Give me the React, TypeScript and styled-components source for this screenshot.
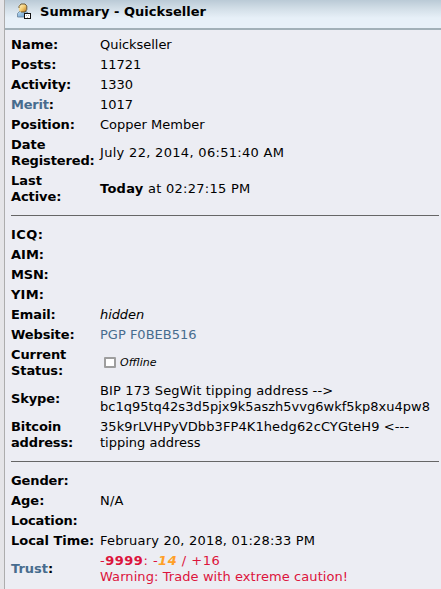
import React from "react";
import styled, { createGlobalStyle } from "styled-components";

const GlobalStyle = createGlobalStyle`
  body {
    margin: 0;
    background: #e5e5e8;
    overflow: hidden;
  }
`;

const Panel = styled.main`
  box-sizing: border-box;
  width: 437px;
  height: 589px;
  margin-left: 4px;
  border-left: 1px solid #adadad;
  background: #ecedf3;
  color: #000;
  font: 13px/16px Verdana, "DejaVu Sans", sans-serif;
  overflow: hidden;
`;

const TitleBar = styled.header`
  box-sizing: border-box;
  display: flex;
  align-items: flex-start;
  gap: 8px;
  height: 30px;
  padding: 4px 0 0 11px;
  border-bottom: 2px solid #a1b0b8;
  background: linear-gradient(#bacad6 0, #d3dfe8 9px, #e7f0f8 18px, #e7f0f8 100%);
`;

const Title = styled.h1`
  margin: 0;
  font-size: 13px;
  line-height: 16px;
  letter-spacing: 0.02px;
  white-space: nowrap;
`;

const Details = styled.dl`
  margin: 4px 0 0;
  padding-left: 6px;
`;

const Row = styled.div`
  display: grid;
  grid-template-columns: 89px 1fr;
  align-items: center;
  padding: 2px 0;
  min-height: 16px;
`;

const Label = styled.dt`
  font-weight: bold;
  white-space: nowrap;
`;

const Value = styled.dd`
  margin: 0;
  white-space: nowrap;
`;

const Line = styled.span<{ $track?: number }>`
  display: block;
  height: 16px;
  line-height: 18px;
  letter-spacing: ${(p) => p.$track ?? 0}px;
`;

const Link = styled.a`
  color: #476c8e;
  text-decoration: none;
`;

const Rule = styled.hr`
  width: 428px;
  height: 1px;
  margin: 9px 0 8px;
  border: 0;
  background: #666;
`;

const Status = styled.span`
  display: flex;
  align-items: center;
  gap: 4px;
  padding-left: 4px;
  font-size: 11px;
  font-style: italic;
`;

const StatusBox = styled.span`
  box-sizing: border-box;
  width: 12px;
  height: 11px;
  margin-top: -1px;
  border: 2px solid #9e9e9e;
  border-radius: 1px;
  background: #fff;
`;

const Danger = styled.span`
  color: #dc143c;
`;

const Score = styled.b`
  color: #ffa028;
  font-style: italic;
`;

const IconDrawing = styled.svg`
  display: block;
  width: 16px;
  height: 16px;
  margin-top: -1px;
`;

const ProfileIcon = () => (
  <IconDrawing viewBox="0 0 16 16" aria-hidden="true">
    <defs>
      <linearGradient id="head" x1="0" y1="0" x2="1" y2="1">
        <stop offset="0" stopColor="#fff8d5" />
        <stop offset=".5" stopColor="#f5ce74" />
        <stop offset="1" stopColor="#b9741c" />
      </linearGradient>
      <linearGradient id="coat" x1="0" y1="0" x2="1" y2="1">
        <stop offset="0" stopColor="#c4e0f3" />
        <stop offset="1" stopColor="#5b94c8" />
      </linearGradient>
    </defs>
    <path d="M4 8 1.5 10.5V14H12V10L9.5 8Z" fill="url(#coat)" stroke="#668299" strokeWidth=".8" />
    <rect x="2.8" y="1" width="7.8" height="8" rx="3" fill="url(#head)" />
    <path d="M3 5V3.5L5 1h4l1.8 2v3.5L9 9H5" fill="none" stroke="#614a20" strokeWidth=".9" />
    <rect x="8.5" y="10.5" width="6" height="5" fill="#fff" stroke="#111" />
    <path d="M10 12h1v1h-1zM12 12h1v1h-1zM11 14h1v1h-1z" fill="#b5b5b5" />
  </IconDrawing>
);

type LineText = [React.ReactNode, number?];
interface Entry {
  label: LineText[];
  value?: LineText[];
}

const Lines = ({ items }: { items: LineText[] }) => (
  <>
    {items.map(([text, track], i) => (
      <Line key={i} $track={track}>{text}</Line>
    ))}
  </>
);

const account: Entry[] = [
  { label: [["Name:"]], value: [["Quickseller", -0.04]] },
  { label: [["Posts:"]], value: [["11721"]] },
  { label: [["Activity:", -0.12]], value: [["1330"]] },
  { label: [[<><Link>Merit</Link>:</>, -0.2]], value: [["1017"]] },
  { label: [["Position:", -0.1]], value: [["Copper Member"]] },
  { label: [["Date"], ["Registered:", -0.13]], value: [["July 22, 2014, 06:51:40 AM", 0.31]] },
  { label: [["Last"], ["Active:", -0.1]], value: [[<><b>Today</b> at 02:27:15 PM</>, 0.27]] },
];

const contact: Entry[] = [
  { label: [["ICQ:", 0.4]] },
  { label: [["AIM:"]] },
  { label: [["MSN:", -0.2]] },
  { label: [["YIM:", 0.2]] },
  { label: [["Email:", -0.1]], value: [[<i>hidden</i>, -0.08]] },
  { label: [["Website:", -0.12]], value: [[<Link>PGP F0BEB516</Link>]] },
  { label: [["Current", -0.1], ["Status:", -0.1]], value: [[<Status><StatusBox />Offline</Status>]] },
  {
    label: [["Skype:", -0.12]],
    value: [["BIP 173 SegWit tipping address -->", 0.14], ["bc1q95tq42s3d5pjx9k5aszh5vvg6wkf5kp8xu4pw8"]],
  },
  {
    label: [["Bitcoin", -0.1], ["address:", -0.15]],
    value: [["35k9rLVHPyVDbb3FP4K1hedg62cCYGteH9 <---", 0.1], ["tipping address"]],
  },
];

const personal: Entry[] = [
  { label: [["Gender:", -0.12]] },
  { label: [["Age:"]], value: [["N/A", 0.2]] },
  { label: [["Location:", -0.12]] },
  { label: [["Local Time:", -0.04]], value: [["February 20, 2018, 01:28:33 PM", 0.19]] },
  {
    label: [[<><Link>Trust</Link>:</>]],
    value: [
      [<Danger>-<b>9999</b>: -<Score>14</Score> / +16</Danger>, 0.5],
      [<Danger>Warning: Trade with extreme caution!</Danger>, 0.08],
    ],
  },
];

const Section = ({ entries }: { entries: Entry[] }) => (
  <>
    {entries.map((entry, i) => (
      <Row key={i}>
        <Label><Lines items={entry.label} /></Label>
        <Value>{entry.value && <Lines items={entry.value} />}</Value>
      </Row>
    ))}
  </>
);

export default function App() {
  return (
    <>
      <GlobalStyle />
      <Panel>
        <TitleBar>
          <ProfileIcon />
          <Title>Summary - Quickseller</Title>
        </TitleBar>
        <Details>
          <Section entries={account} />
          <Rule />
          <Section entries={contact} />
          <Rule />
          <Section entries={personal} />
        </Details>
      </Panel>
    </>
  );
}
